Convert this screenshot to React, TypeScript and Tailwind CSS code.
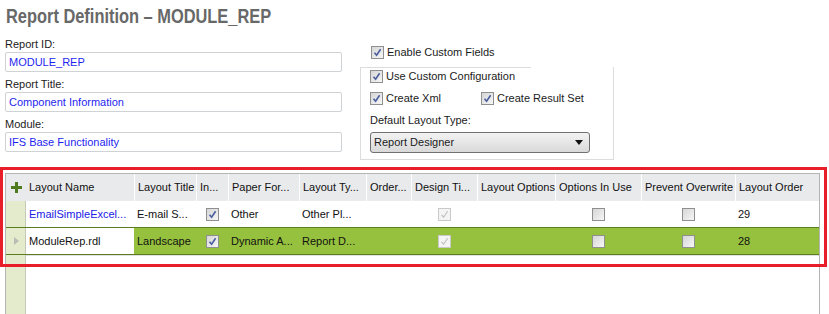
function Check({ checked = false, disabled = false }: { checked?: boolean; disabled?: boolean }) {
    return (
        <span
            className={
                "inline-flex items-center justify-center w-[13px] h-[13px] border shrink-0 " +
                (disabled
                    ? "border-[#c9c9c9] bg-[#f4f4f4]"
                    : "border-[#8e8f8f] bg-gradient-to-br from-[#d6d6d6] to-[#f6f6f6]")
            }
        >
            {checked && (
                <svg width="9" height="9" viewBox="0 0 9 9">
                    <path
                        d="M1.5 4.8 L3.6 7.2 L7.6 1.2"
                        fill="none"
                        stroke={disabled ? "#bdbdbd" : "#4a5d9e"}
                        strokeWidth={disabled ? 1.1 : 1.6}
                    />
                </svg>
            )}
        </span>
    );
}

function Field({ label, value }: { label: string; value: string }) {
    return (
        <div className="flex flex-col">
            <div className="h-[16px] leading-[16px] text-[11px] text-[#1b1b1b]">{label}</div>
            <div className="h-[20px] border border-[#cfd3d6] rounded-[2px] pl-[3px] leading-[18px] text-[11px] text-[#1f1fef]">
                {value}
            </div>
        </div>
    );
}

const cols = "grid-cols-[20px_108px_62px_32px_71px_67px_45px_66px_78px_86px_94px_85px]";

const headers = [
    "Layout Name",
    "Layout Title",
    "In...",
    "Paper For...",
    "Layout Ty...",
    "Order...",
    "Design Ti...",
    "Layout Options",
    "Options In Use",
    "Prevent Overwrite",
    "Layout Order",
];

function Row({ selected }: { selected?: boolean }) {
    const cell = "flex items-center pl-[3px] whitespace-nowrap overflow-hidden";
    const center = "flex items-center justify-center";
    return (
        <div
            className={
                "grid h-[27px] text-[11px] text-[#111] border-b " +
                cols +
                (selected ? " bg-[#96c13e] border-[#5a7d1e]" : " bg-white border-[#5a7d1e]")
            }
        >
            <div className="bg-[#e3ebcc] border-r border-[#c4c9b8] flex items-center pl-[8px]">
                {selected && (
                    <svg width="5" height="8" viewBox="0 0 5 8">
                        <path d="M0 0 L5 4 L0 8 Z" fill="#b9bcb4" />
                    </svg>
                )}
            </div>
            <div className={cell + " bg-white " + (selected ? "text-[#111]" : "text-[#2020e6]")}>
                {selected ? "ModuleRep.rdl" : "EmailSimpleExcel..."}
            </div>
            <div className={cell}>{selected ? "Landscape" : "E-mail S..."}</div>
            <div className={center}>
                <Check checked />
            </div>
            <div className={cell}>{selected ? "Dynamic A..." : "Other"}</div>
            <div className={cell}>{selected ? "Report D..." : "Other Pl..."}</div>
            <div />
            <div className={center}>
                <Check checked disabled />
            </div>
            <div />
            <div className={center}>
                <Check />
            </div>
            <div className={center}>
                <Check />
            </div>
            <div className={cell}>{selected ? "28" : "29"}</div>
        </div>
    );
}

export default function App() {
    return (
        <div className="w-[829px] h-[314px] bg-white relative overflow-hidden font-['Liberation_Sans',Arial,sans-serif]">
            <div className="h-[36px] pl-[6px] pt-[3px]">
                <span className="inline-block origin-left scale-x-[0.82] whitespace-nowrap text-[20px] leading-[26px] font-bold text-[#686868]">
                    Report Definition – MODULE_REP
                </span>
            </div>

            <div className="flex h-[131px]">
                <div className="ml-[5px] w-[337px] flex flex-col gap-[4px]">
                    <Field label="Report ID:" value="MODULE_REP" />
                    <Field label="Report Title:" value="Component Information" />
                    <Field label="Module:" value="IFS Base Functionality" />
                </div>

                <div className="ml-[18px] flex flex-col text-[11px] text-[#1b1b1b]">
                    <div className="flex items-center gap-[3px] mt-[10px] ml-[11px] h-[13px]">
                        <Check checked />
                        <span>Enable Custom Fields</span>
                    </div>
                    <div className="relative mt-[8px] w-[254px] border-x border-b border-[#dcdcdc] pl-[9px] pb-[6px] pt-[3px]">
                        <div className="absolute left-0 top-0 w-[170px] border-t border-[#dcdcdc]" />
                        <div className="flex items-center gap-[3px] h-[13px]">
                            <Check checked />
                            <span>Use Custom Configuration</span>
                        </div>
                        <div className="flex items-center h-[13px] mt-[9px]">
                            <div className="flex items-center gap-[3px] w-[111px]">
                                <Check checked />
                                <span>Create Xml</span>
                            </div>
                            <div className="flex items-center gap-[3px]">
                                <Check checked />
                                <span>Create Result Set</span>
                            </div>
                        </div>
                        <div className="h-[16px] leading-[16px] mt-[7px]">Default Layout Type:</div>
                        <div className="mt-[4px] w-[220px] h-[21px] border border-[#707070] rounded-[3px] bg-gradient-to-b from-[#f3f3f3] to-[#d9d9d9] flex items-center justify-between pl-[3px] pr-[6px]">
                            <span>Report Designer</span>
                            <svg width="8" height="5" viewBox="0 0 8 5">
                                <path d="M0 0 H8 L4 5 Z" fill="#111" />
                            </svg>
                        </div>
                    </div>
                </div>
            </div>

            <div className="ml-[5px] mt-[6px] w-[815px] h-[150px] border border-[#b4b4b4] flex flex-col">
                <div className={"grid h-[27px] bg-[#e9eaec] text-[11px] text-[#111] " + cols}>
                    <div className="flex items-center justify-center">
                        <svg width="11" height="11" viewBox="0 0 11 11">
                            <path d="M5.5 0 V11 M0 5.5 H11" stroke="#4f7a1f" strokeWidth="3" />
                        </svg>
                    </div>
                    {headers.map((h, i) => (
                        <div
                            key={h}
                            className={
                                "flex items-center pl-[3px] whitespace-nowrap overflow-hidden " +
                                (i > 0 ? "border-l border-white" : "")
                            }
                        >
                            {h}
                        </div>
                    ))}
                </div>
                <Row />
                <Row selected />
                <div className="flex flex-1">
                    <div className="w-[20px] bg-[#e3ebcc] border-r border-[#c4c9b8]" />
                    <div className="flex-1 border-t border-[#e2e2e2]" />
                </div>
            </div>

            <div className="absolute left-0 top-[167px] w-[827px] h-[100px] border-[3px] border-[#e81f29]" />
        </div>
    );
}
